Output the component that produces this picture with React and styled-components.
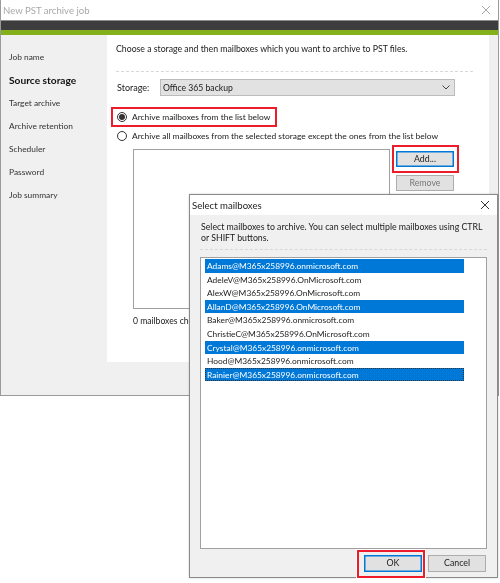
import React from "react";
import styled, { createGlobalStyle } from "styled-components";

const Global = createGlobalStyle`
  html, body { margin: 0; padding: 0; background: #fff; }
  body { font-family: Lato, Roboto, "Liberation Sans", sans-serif; font-size: 8.5px; color: #1a1a1a; }
`;

const Page = styled.div`
  position: relative;
  width: 500px;
  height: 583px;
  overflow: hidden;
  background: #fff;
  filter: blur(0.3px);
`;

const MainWindow = styled.div`
  width: 499px;
  height: 396px;
  box-sizing: border-box;
  border: 1px solid #9a9a9a;
  border-top: 0;
  background: #f0f0f0;
  display: flex;
  flex-direction: column;
`;

const TitleBar = styled.div`
  height: 20px;
  flex: none;
  background: #fff;
  display: flex;
  align-items: center;
  justify-content: space-between;
  padding: 0 7px 0 2px;
  font-size: 9.6px;
  color: ${(p) => p.$color || "#a8a8a8"};
`;

const CloseIcon = ({ color }) => (
  <svg width="10" height="10" viewBox="0 0 10 10" fill="none" stroke={color} strokeWidth="1">
    <path d="M1 1l8 8M9 1l-8 8" />
  </svg>
);

const DarkBand = styled.div`
  height: 10px;
  flex: none;
  background: #3d3d3d;
  border-top: 1px solid #8c8c8c;
  box-sizing: border-box;
`;

const GreenBand = styled.div`
  height: 5px;
  flex: none;
  background: #84b01b;
`;

const MainBody = styled.div`
  display: flex;
  height: 327px;
  flex: none;
`;

const Sidebar = styled.nav`
  width: 106px;
  flex: none;
  padding: 14px 0 0 8px;
  display: flex;
  flex-direction: column;
  box-sizing: border-box;
`;

const NavItem = styled.div`
  height: 23px;
  line-height: 16px;
  font-size: ${(p) => (p.$active ? 10.2 : 8.4)}px;
  font-weight: ${(p) => (p.$active ? 700 : 400)};
  color: ${(p) => (p.$active ? "#111" : "#333")};
`;

const Content = styled.div`
  width: 382px;
  flex: none;
  background: #fff;
  padding: 6px 16px 0 9px;
  box-sizing: border-box;
`;

const Intro = styled.div`
  height: 15px;
  line-height: 15px;
  font-size: 8.73px;
  white-space: nowrap;
`;

const Dashed = styled.div`
  margin-top: ${(p) => p.$top || 0}px;
  border-top: 1px dashed #d8d8d8;
`;

const StorageRow = styled.div`
  display: flex;
  align-items: center;
  margin-top: 7px;
  height: 17px;
`;

const StorageLabel = styled.div`
  width: 44px;
  padding-left: 1px;
  box-sizing: border-box;
  font-size: 9px;
`;

const Select = styled.div`
  width: 295px;
  height: 17px;
  box-sizing: border-box;
  background: #e2e2e2;
  border: 1px solid #bcbcbc;
  padding: 0 4px 0 2px;
  display: flex;
  align-items: center;
  justify-content: space-between;
  font-size: 8.65px;
`;

const RadioRow = styled.label`
  display: flex;
  align-items: center;
  gap: 5px;
  height: 19px;
  padding-left: 1px;
  margin-top: ${(p) => p.$top || 0}px;
  font-size: 8.45px;
  white-space: nowrap;
`;

const RadioDot = styled.span`
  width: 10px;
  height: 10px;
  flex: none;
  box-sizing: border-box;
  border: 1px solid #333;
  border-radius: 50%;
  display: flex;
  align-items: center;
  justify-content: center;
  &::after {
    content: "";
    display: ${(p) => (p.$on ? "block" : "none")};
    width: 6px;
    height: 6px;
    border-radius: 50%;
    background: #333;
  }
`;

const MailboxArea = styled.div`
  display: flex;
  gap: 6px;
  margin: 4px 0 0 17px;
`;

const MailboxColumn = styled.div`
  width: 257px;
  flex: none;
`;

const EmptyList = styled.div`
  height: 160px;
  box-sizing: border-box;
  border: 1px solid #a0a0a0;
  background: #fff;
`;

const Counter = styled.div`
  margin-top: 5px;
  font-size: 8.6px;
  line-height: 14px;
  white-space: nowrap;
`;

const ButtonColumn = styled.div`
  display: flex;
  flex-direction: column;
  gap: 8px;
  padding-top: 2px;
`;

const Button = styled.button`
  width: 58px;
  height: ${(p) => p.$h || 16}px;
  padding: 0;
  box-sizing: border-box;
  background: #e1e1e1;
  border: 1px solid ${(p) => (p.$focus ? "#0078d7" : "#adadad")};
  box-shadow: ${(p) => (p.$focus ? "inset 0 0 0 0.5px #0078d7" : "none")};
  font: inherit;
  font-size: 8.8px;
  line-height: 1;
  color: ${(p) => (p.$disabled ? "#777" : "#222")};
`;

const Footer = styled.div`
  flex: 1;
`;

const Annotation = styled.div`
  position: absolute;
  left: ${(p) => p.$x}px;
  top: ${(p) => p.$y}px;
  width: ${(p) => p.$w}px;
  height: ${(p) => p.$h}px;
  box-sizing: border-box;
  border: 2px solid #ec1c2a;
  box-shadow: 0 0 0 1px #fff;
  pointer-events: none;
`;

const Dialog = styled.div`
  position: absolute;
  left: 189px;
  top: 194px;
  width: 309px;
  height: 384px;
  box-sizing: border-box;
  border: 1px solid #8a8a8a;
  background: #f0f0f0;
  display: flex;
  flex-direction: column;
  box-shadow: 0 0 2px rgba(0, 0, 0, 0.2);
`;

const DialogText = styled.div`
  padding: 7px 8px 0 11px;
  font-size: 8.75px;
  line-height: 10.5px;
  height: 27px;
  box-sizing: border-box;
`;

const DialogRule = styled.div`
  margin: 7px 10px 0 10px;
  border-top: 1px dashed #d8d8d8;
`;

const ListBox = styled.div`
  margin: 7px 0 0 10px;
  width: 287px;
  height: 292px;
  box-sizing: border-box;
  background: #fff;
  border: 1px solid #a0a0a0;
  padding: 1px 0 0 4px;
`;

const ListRow = styled.div`
  width: 259px;
  height: 13.6px;
  line-height: 14.6px;
  padding-left: 2px;
  box-sizing: border-box;
  font-size: 8.4px;
  white-space: nowrap;
  background: ${(p) => (p.$sel ? "#0078d7" : "transparent")};
  color: ${(p) => (p.$sel ? "#fff" : "#222")};
  outline: ${(p) => (p.$focus ? "1px dotted #333" : "none")};
  outline-offset: -1px;
`;

const DialogActions = styled.div`
  display: flex;
  justify-content: flex-end;
  gap: 6px;
  margin: 6px 11px 0 0;
`;

const nav = ["Job name", "Source storage", "Target archive", "Archive retention", "Scheduler", "Password", "Job summary"];

const rows = [
  ["Adams@M365x258996.onmicrosoft.com", 1],
  ["AdeleV@M365x258996.OnMicrosoft.com", 0],
  ["AlexW@M365x258996.OnMicrosoft.com", 0],
  ["AllanD@M365x258996.OnMicrosoft.com", 1],
  ["Baker@M365x258996.onmicrosoft.com", 0],
  ["ChristieC@M365x258996.OnMicrosoft.com", 0],
  ["Crystal@M365x258996.onmicrosoft.com", 1],
  ["Hood@M365x258996.onmicrosoft.com", 0],
  ["Rainier@M365x258996.onmicrosoft.com", 1],
];

export default function App() {
  return (
    <Page>
      <Global />
      <MainWindow>
        <TitleBar>
          <span>New PST archive job</span>
          <CloseIcon color="#a8a8a8" />
        </TitleBar>
        <DarkBand />
        <GreenBand />
        <MainBody>
          <Sidebar>
            {nav.map((n) => (
              <NavItem key={n} $active={n === "Source storage"}>{n}</NavItem>
            ))}
          </Sidebar>
          <Content>
            <Intro>Choose a storage and then mailboxes which you want to archive to PST files.</Intro>
            <Dashed $top={15} />
            <StorageRow>
              <StorageLabel>Storage:</StorageLabel>
              <Select>
                <span>Office 365 backup</span>
                <svg width="8" height="5" viewBox="0 0 8 5" fill="none" stroke="#444" strokeWidth="1">
                  <path d="M0.5 0.5L4 4l3.5-3.5" />
                </svg>
              </Select>
            </StorageRow>
            <RadioRow $top={11}><RadioDot $on />Archive mailboxes from the list below</RadioRow>
            <RadioRow><RadioDot />Archive all mailboxes from the selected storage except the ones from the list below</RadioRow>
            <MailboxArea>
              <MailboxColumn>
                <EmptyList />
                <Counter>0 mailboxes chosen</Counter>
              </MailboxColumn>
              <ButtonColumn>
                <Button $focus>Add...</Button>
                <Button $disabled>Remove</Button>
              </ButtonColumn>
            </MailboxArea>
          </Content>
        </MainBody>
        <Footer />
      </MainWindow>

      <Annotation $x={111} $y={107} $w={166} $h={20} />
      <Annotation $x={392} $y={145} $w={67} $h={28} />

      <Dialog>
        <TitleBar $color="#222">
          <span>Select mailboxes</span>
          <CloseIcon color="#333" />
        </TitleBar>
        <DialogText>
          Select mailboxes to archive. You can select multiple mailboxes using CTRL or SHIFT buttons.
        </DialogText>
        <DialogRule />
        <ListBox>
          {rows.map(([t, s], i) => (
            <ListRow key={t} $sel={!!s} $focus={i === rows.length - 1}>{t}</ListRow>
          ))}
        </ListBox>
        <DialogActions>
          <Button $focus $h={17}>OK</Button>
          <Button $h={17}>Cancel</Button>
        </DialogActions>
      </Dialog>

      <Annotation $x={357} $y={550} $w={68} $h={28} />
    </Page>
  );
}
